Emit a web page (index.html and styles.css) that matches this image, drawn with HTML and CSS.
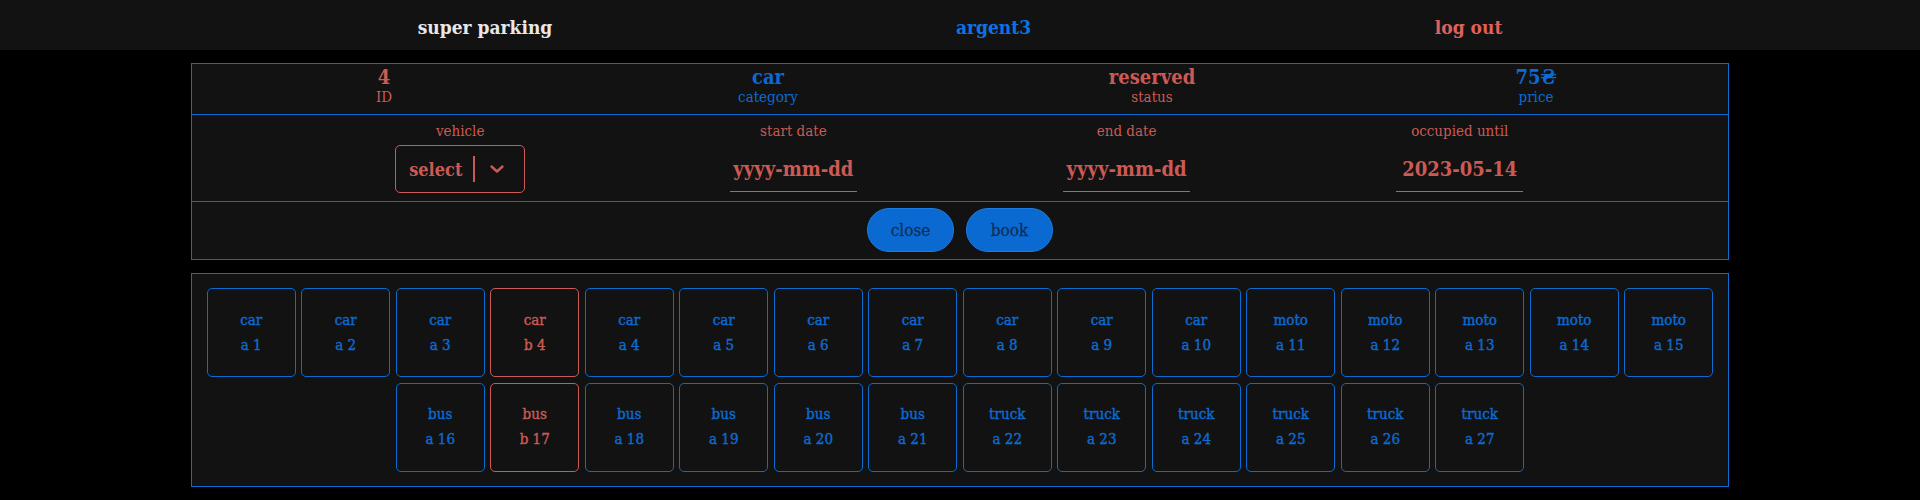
FILE: index.html
```html
<!DOCTYPE html>
<html lang="en">
<head>
<meta charset="utf-8">
<title>super parking</title>
<link rel="stylesheet" href="styles.css">
</head>
<body>
<header class="topbar">
  <span class="brand">super parking</span>
  <span class="user">argent3</span>
  <span class="logout">log out</span>
</header>

<section class="panel details">
  <div class="info-row">
    <div class="info red"><div class="value">4</div><div class="label">ID</div></div>
    <div class="info blue"><div class="value">car</div><div class="label">category</div></div>
    <div class="info red"><div class="value">reserved</div><div class="label">status</div></div>
    <div class="info blue"><div class="value">75₴</div><div class="label">price</div></div>
  </div>
  <div class="form-row">
    <div class="field">
      <div class="field-label">vehicle</div>
      <div class="select">
        <span class="select-text">select</span>
        <span class="select-sep"></span>
        <svg class="chev" width="16" height="10" viewBox="0 0 16 10"><path d="M2.5 2.5 L8 7.5 L13.5 2.5" fill="none" stroke="currentColor" stroke-width="2.4" stroke-linecap="round" stroke-linejoin="round"/></svg>
      </div>
    </div>
    <div class="field">
      <div class="field-label">start date</div>
      <div class="date">yyyy-mm-dd</div>
    </div>
    <div class="field">
      <div class="field-label">end date</div>
      <div class="date">yyyy-mm-dd</div>
    </div>
    <div class="field">
      <div class="field-label">occupied until</div>
      <div class="date">2023-05-14</div>
    </div>
  </div>
  <div class="actions">
    <button class="btn">close</button>
    <button class="btn">book</button>
  </div>
</section>

<section class="panel spots">
  <div class="spot"><span>car</span><span>a 1</span></div>
  <div class="spot"><span>car</span><span>a 2</span></div>
  <div class="spot"><span>car</span><span>a 3</span></div>
  <div class="spot taken"><span>car</span><span>b 4</span></div>
  <div class="spot"><span>car</span><span>a 4</span></div>
  <div class="spot"><span>car</span><span>a 5</span></div>
  <div class="spot"><span>car</span><span>a 6</span></div>
  <div class="spot"><span>car</span><span>a 7</span></div>
  <div class="spot"><span>car</span><span>a 8</span></div>
  <div class="spot"><span>car</span><span>a 9</span></div>
  <div class="spot"><span>car</span><span>a 10</span></div>
  <div class="spot"><span>moto</span><span>a 11</span></div>
  <div class="spot"><span>moto</span><span>a 12</span></div>
  <div class="spot"><span>moto</span><span>a 13</span></div>
  <div class="spot"><span>moto</span><span>a 14</span></div>
  <div class="spot"><span>moto</span><span>a 15</span></div>
  <div class="spot"><span>bus</span><span>a 16</span></div>
  <div class="spot taken"><span>bus</span><span>b 17</span></div>
  <div class="spot"><span>bus</span><span>a 18</span></div>
  <div class="spot"><span>bus</span><span>a 19</span></div>
  <div class="spot"><span>bus</span><span>a 20</span></div>
  <div class="spot"><span>bus</span><span>a 21</span></div>
  <div class="spot"><span>truck</span><span>a 22</span></div>
  <div class="spot"><span>truck</span><span>a 23</span></div>
  <div class="spot"><span>truck</span><span>a 24</span></div>
  <div class="spot"><span>truck</span><span>a 25</span></div>
  <div class="spot"><span>truck</span><span>a 26</span></div>
  <div class="spot"><span>truck</span><span>a 27</span></div>
</section>
</body>
</html>
```

FILE: styles.css
```css
* { box-sizing: border-box; }

html, body {
  margin: 0;
  background: #000;
  font-family: "DejaVu Serif Condensed", "DejaVu Serif", serif;
  font-stretch: semi-condensed;
}

.topbar {
  height: 50px;
  background: #121212;
  display: flex;
  justify-content: space-evenly;
  align-items: center;
  padding: 4px 14px 0;
  font-size: 19px;
  font-weight: 700;
}
.brand { color: #e8e8e8; }
.user { color: #0a74e6; }
.logout { color: #e0605a; }

.panel {
  width: 1538px;
  margin: 13px auto 0;
  border: 1px solid #0b6bd2;
  background: #121212;
}

.info-row {
  display: grid;
  grid-template-columns: repeat(4, 1fr);
  height: 51px;
  border-bottom: 1px solid #0b6bd2;
  padding-top: 3px;
}
.info { text-align: center; }
.info .value { font-size: 20px; font-weight: 700; line-height: 21px; }
.info .label { font-size: 15px; line-height: 19px; }
.red { color: #cc5a54; }
.blue { color: #0b6bd2; }

.form-row {
  display: flex;
  justify-content: space-evenly;
  height: 87px;
  border-bottom: 1px solid #0b6bd2;
  padding-top: 6px;
  color: #cc5a54;
}
.field {
  width: 130px;
  display: flex;
  flex-direction: column;
  align-items: center;
}
.field-label {
  font-size: 15px;
  line-height: 20px;
  height: 24px;
}
.select {
  width: 130px;
  height: 48px;
  border: 1px solid #cc5a54;
  border-radius: 5px;
  display: flex;
  align-items: center;
  padding-left: 13px;
  gap: 11px;
  font-size: 18px;
  font-weight: 700;
}
.select-sep {
  width: 2px;
  height: 26px;
  background: #cc5a54;
}
.chev { margin-left: 3px; color: #cc5a54; }
.date {
  width: 127px;
  height: 47px;
  border-bottom: 1px solid #cc5a54;
  text-align: center;
  font-size: 20px;
  font-weight: 700;
  line-height: 40px;
  padding-top: 4px;
  white-space: nowrap;
}

.actions {
  display: flex;
  justify-content: center;
  gap: 12px;
  height: 57px;
  padding-top: 6px;
}
.btn {
  width: 87px;
  height: 44px;
  border-radius: 22px;
  border: 1px solid #1a7ce4;
  background: #0a6ad2;
  color: #112f55;
  font-family: inherit;
  font-stretch: inherit;
  font-size: 17px;
  -webkit-text-stroke: 0.3px #112f55;
  padding: 0;
}

.spots {
  display: flex;
  flex-wrap: wrap;
  justify-content: center;
  gap: 5.5px;
  padding: 14px 14px;
}
.spot {
  width: 89px;
  height: 89px;
  border: 1px solid #0b6bd2;
  border-radius: 5px;
  color: #0b6bd2;
  display: flex;
  flex-direction: column;
  align-items: center;
  justify-content: center;
  gap: 7px;
  font-size: 15px;
  font-weight: 400;
  line-height: 18px;
  padding-bottom: 1px;
  -webkit-text-stroke: 0.4px currentColor;
}
.spot.taken {
  border-color: #cc5a54;
  color: #cc5a54;
}
```
